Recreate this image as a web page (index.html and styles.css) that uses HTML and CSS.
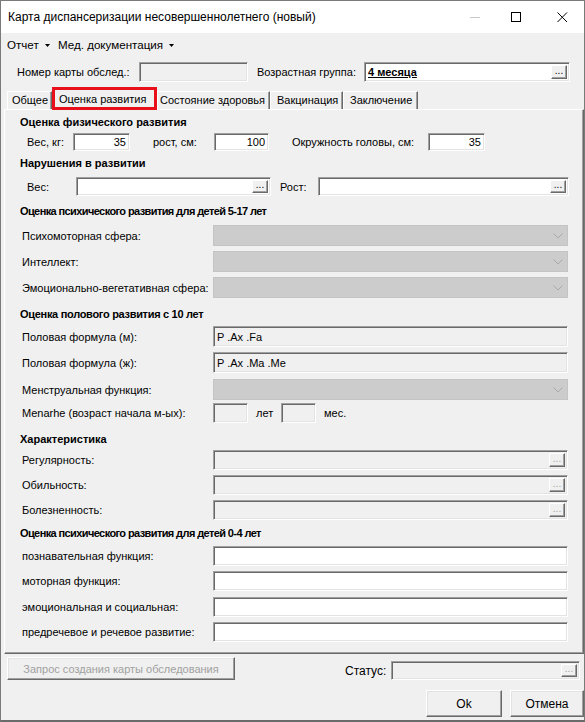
FILE: index.html
```html
<!DOCTYPE html>
<html lang="ru">
  <head>
    <meta charset="UTF-8" />
    <title>Карта диспансеризации несовершеннолетнего (новый)</title>
    <link rel="stylesheet" href="styles.css">
  </head>
  <body>
    <div class="window">
      <div class="titlebar">
        <span class="title">Карта диспансеризации несовершеннолетнего (новый)</span>
        <div class="caption-btns">
          <svg class="cap-min" width="11" height="11" viewBox="0 0 11 11"><path d="M0 5.5h10" stroke="#c8c8c8" stroke-width="1" /></svg>
          <svg class="cap-max" width="11" height="11" viewBox="0 0 11 11"><rect x="0.5" y="0.5" width="9" height="9" fill="none" stroke="#000" stroke-width="1" /></svg>
          <svg class="cap-close" width="11" height="11" viewBox="0 0 11 11"><path d="M0.5 0.5l9.5 9.5M10 0.5l-9.5 9.5" stroke="#000" stroke-width="1" /></svg>
        </div>
      </div>

      <div class="menubar">
        <span class="menu-item">Отчет <svg width="5" height="3" viewBox="0 0 5 3"><path d="M0 0h5l-2.5 3z" fill="#000" /></svg></span>
        <span class="menu-item">Мед. документация <svg width="5" height="3" viewBox="0 0 5 3"><path d="M0 0h5l-2.5 3z" fill="#000" /></svg></span>
      </div>

      <div class="header-row">
        <label class="hdr-label">Номер карты обслед.:</label>
        <input class="tb disabled card-no" type="text" value="" />
        <label class="hdr-label age-label">Возрастная группа:</label>
        <div class="tb picker age-group">
          <span class="picker-text"><b><u>4 месяца</u></b></span>
          <button class="dots">...</button>
        </div>
      </div>

      <div class="tabs">
        <span class="tab tab-common">Общее</span>
        <span class="tab tab-active">Оценка развития</span>
        <span class="tab tab-health">Состояние здоровья</span>
        <span class="tab tab-vacc">Вакцинация</span>
        <span class="tab tab-concl">Заключение</span>
      </div>

      <div class="tab-panel">
        <div class="group-title mt-5">Оценка физического развития</div>
        <div class="row indent mt-4 h-18">
          <span class="w-46">Вес, кг:</span>
          <input class="tb num w-57" type="text" value="35" />
          <span class="ml-23 w-61">рост, см:</span>
          <input class="tb num w-55" type="text" value="100" />
          <span class="ml-23 w-136">Окружность головы, см:</span>
          <input class="tb num w-57" type="text" value="35" />
        </div>

        <div class="group-title mt-5">Нарушения в развитии</div>
        <div class="row indent mt-7 h-19">
          <span class="w-49">Вес:</span>
          <div class="tb picker w-195"><span class="picker-text"></span><button class="dots">...</button></div>
          <span class="ml-9 w-38">Рост:</span>
          <div class="tb picker w-251"><span class="picker-text"></span><button class="dots">...</button></div>
        </div>

        <div class="group-title narrow mt-8">Оценка психического развития для детей 5-17 лет</div>
        <div class="row mt-7 h-21">
          <span class="label">Психомоторная сфера:</span>
          <div class="combo"><svg width="10" height="6" viewBox="0 0 10 6"><path d="M0.5 0.5l4.5 4.5 4.5-4.5" fill="none" stroke="#a9a9a9" /></svg></div>
        </div>
        <div class="row mt-5 h-21">
          <span class="label">Интеллект:</span>
          <div class="combo"><svg width="10" height="6" viewBox="0 0 10 6"><path d="M0.5 0.5l4.5 4.5 4.5-4.5" fill="none" stroke="#a9a9a9" /></svg></div>
        </div>
        <div class="row mt-5 h-21">
          <span class="label">Эмоционально-вегетативная сфера:</span>
          <div class="combo"><svg width="10" height="6" viewBox="0 0 10 6"><path d="M0.5 0.5l4.5 4.5 4.5-4.5" fill="none" stroke="#a9a9a9" /></svg></div>
        </div>

        <div class="group-title semi mt-9">Оценка полового развития с 10 лет</div>
        <div class="row mt-5 h-21">
          <span class="label">Половая формула (м):</span>
          <input class="tb disabled wide" type="text" value="P .Ax .Fa" />
        </div>
        <div class="row mt-5 h-21">
          <span class="label">Половая формула (ж):</span>
          <input class="tb disabled wide" type="text" value="P .Ax .Ma .Me" />
        </div>
        <div class="row mt-6 h-21">
          <span class="label">Менструальная функция:</span>
          <div class="combo"><svg width="10" height="6" viewBox="0 0 10 6"><path d="M0.5 0.5l4.5 4.5 4.5-4.5" fill="none" stroke="#a9a9a9" /></svg></div>
        </div>
        <div class="row mt-3 h-20">
          <span class="label">Menarhe (возраст начала м-ых):</span>
          <input class="tb disabled w-35" type="text" value="" />
          <span class="ml-8 w-25">лет</span>
          <input class="tb disabled w-35" type="text" value="" />
          <span class="ml-8">мес.</span>
        </div>

        <div class="group-title mt-9">Характеристика</div>
        <div class="row mt-4 h-20">
          <span class="label">Регулярность:</span>
          <div class="tb picker disabled wide"><span class="picker-text"></span><button class="dots">...</button></div>
        </div>
        <div class="row mt-5 h-20">
          <span class="label">Обильность:</span>
          <div class="tb picker disabled wide"><span class="picker-text"></span><button class="dots">...</button></div>
        </div>
        <div class="row mt-5 h-20">
          <span class="label">Болезненность:</span>
          <div class="tb picker disabled wide"><span class="picker-text"></span><button class="dots">...</button></div>
        </div>

        <div class="group-title narrow mt-6">Оценка психического развития для детей 0-4 лет</div>
        <div class="row mt-6 h-20">
          <span class="label">познавательная функция:</span>
          <input class="tb wide" type="text" value="" />
        </div>
        <div class="row mt-5 h-20">
          <span class="label">моторная функция:</span>
          <input class="tb wide" type="text" value="" />
        </div>
        <div class="row mt-6 h-20">
          <span class="label">эмоциональная и социальная:</span>
          <input class="tb wide" type="text" value="" />
        </div>
        <div class="row mt-5 h-20">
          <span class="label">предречевое и речевое развитие:</span>
          <input class="tb wide" type="text" value="" />
        </div>
      </div>

      <div class="footer-row">
        <button class="btn btn-request" disabled>Запрос создания карты обследования</button>
        <span class="status-label">Статус:</span>
        <div class="tb picker disabled status"><span class="picker-text"></span><button class="dots">...</button></div>
      </div>

      <div class="dialog-buttons">
        <button class="btn btn-ok">Ok</button>
        <button class="btn btn-cancel">Отмена</button>
      </div>
    </div>
  </body>
</html>
```

FILE: styles.css
```css
* {
  box-sizing: border-box;
}

body {
  margin: 0;
  font-family: "Liberation Sans", Arial, sans-serif;
  font-size: 11px;
  color: #000;
  background: #f0f0f0;
}

.window {
  width: 585px;
  height: 722px;
  border: 1px solid #7a7a7a;
  border-bottom: 2px solid #6a6a6a;
  background: #f0f0f0;
  display: flex;
  flex-direction: column;
  overflow: hidden;
}

/* title bar */
.titlebar {
  height: 32px;
  background: #fff;
  display: flex;
  align-items: center;
  padding-left: 7px;
  flex-shrink: 0;
}

.title {
  font-size: 12px;
  flex: 1;
}

.caption-btns {
  display: flex;
  align-items: center;
}

.caption-btns svg {
  display: block;
}

.cap-min {
  margin-right: 30px;
}

.cap-max {
  margin-right: 35px;
}

.cap-close {
  margin-right: 16px;
}

/* menu */
.menubar {
  height: 22px;
  display: flex;
  align-items: center;
  padding-left: 6px;
  font-size: 11.6px;
  flex-shrink: 0;
}

.menu-item {
  margin-right: 8px;
}

.menu-item svg {
  margin-left: 3px;
  vertical-align: 2px;
}

/* header row */
.header-row {
  height: 20px;
  margin-top: 7px;
  display: flex;
  align-items: center;
  padding-left: 16px;
  flex-shrink: 0;
}

.hdr-label {
  width: 122px;
}

.age-label {
  width: 107px;
  margin-left: 9px;
}

.card-no {
  width: 109px;
  height: 20px;
}

.age-group {
  width: 206px;
  height: 20px;
}

/* text boxes */
.tb {
  font: inherit;
  color: #000;
  background: #fff;
  border: 1px solid;
  border-color: #a0a0a0 #fff #fff #a0a0a0;
  box-shadow: inset 1px 1px 0 #696969, inset -1px -1px 0 #e3e3e3;
  padding: 0 3px;
  margin: 0;
  height: 100%;
  outline: none;
}

.tb.disabled {
  background: #f0f0f0;
}

.tb.num {
  text-align: right;
}

.tb.wide {
  width: 355px;
}

.picker {
  display: flex;
  align-items: center;
  padding: 2px 2px 2px 3px;
}

.picker-text {
  flex: 1;
}

.dots {
  width: 16px;
  height: 100%;
  padding: 0 0 2px;
  font: inherit;
  font-size: 10px;
  line-height: 1;
  display: flex;
  align-items: flex-end;
  justify-content: center;
  color: #000;
  background: #f0f0f0;
  border: 1px solid;
  border-color: #fff #696969 #696969 #fff;
  box-shadow: inset -1px -1px 0 #a0a0a0;
}

.picker.disabled .dots {
  color: #a0a0a0;
}

/* tabs */
.tabs {
  height: 22px;
  margin-top: 5px;
  display: flex;
  align-items: flex-end;
  padding-left: 6px;
  flex-shrink: 0;
}

.tab {
  height: 18px;
  line-height: 17px;
  padding-left: 4px;
  border-top: 1px solid #fff;
  border-left: 1px solid #fff;
  border-right: 1px solid #696969;
  box-shadow: inset -1px 0 0 #a0a0a0;
  white-space: nowrap;
}

.tab-common {
  width: 45px;
}

.tab-active {
  width: 105px;
  height: 23px;
  line-height: 18px;
  padding-left: 4px;
  margin-bottom: -1px;
  border: 3px solid #e8101a;
  box-shadow: none;
  background: #f0f0f0;
  position: relative;
  z-index: 1;
}

.tab-health {
  width: 113px;
  padding-left: 2px;
}

.tab-vacc {
  width: 73px;
  padding-left: 6px;
}

.tab-concl {
  width: 75px;
  padding-left: 6px;
}

/* tab page */
.tab-panel {
  height: 545px;
  margin-left: 3px;
  width: 580px;
  border-top: 1px solid #fff;
  border-left: 1px solid #fff;
  border-right: 1px solid #696969;
  border-bottom: 1px solid #696969;
  box-shadow: inset -1px -1px 0 #a0a0a0;
  padding-left: 15px;
  flex-shrink: 0;
}

.group-title {
  height: 14px;
  line-height: 14px;
  font-weight: bold;
  white-space: nowrap;
}

.group-title.narrow {
  letter-spacing: -0.6px;
}

.group-title.semi {
  letter-spacing: -0.3px;
}

.row {
  display: flex;
  align-items: center;
  padding-left: 2px;
  white-space: nowrap;
}

.row.indent {
  padding-left: 7px;
}

.label {
  width: 191px;
  flex-shrink: 0;
}

.combo {
  width: 355px;
  height: 100%;
  background: #cccccc;
  border: 1px solid #c4c4c4;
  display: flex;
  align-items: center;
  justify-content: flex-end;
  padding-right: 4px;
}

.combo svg {
  display: block;
}

/* spacing helpers */
.mt-3 { margin-top: 3px; }
.mt-4 { margin-top: 4px; }
.mt-5 { margin-top: 5px; }
.mt-6 { margin-top: 6px; }
.mt-7 { margin-top: 7px; }
.mt-8 { margin-top: 8px; }
.mt-9 { margin-top: 9px; }
.ml-8 { margin-left: 8px; }
.ml-9 { margin-left: 9px; }
.ml-23 { margin-left: 23px; }
.h-18 { height: 18px; }
.h-19 { height: 19px; }
.h-20 { height: 20px; }
.h-21 { height: 21px; }
.w-25 { width: 25px; }
.w-35 { width: 35px; }
.w-38 { width: 38px; }
.w-46 { width: 46px; }
.w-49 { width: 49px; }
.w-55 { width: 55px; }
.w-57 { width: 57px; }
.w-61 { width: 61px; }
.w-136 { width: 136px; }
.w-195 { width: 195px; }
.w-251 { width: 251px; }

/* bottom */
.footer-row {
  height: 23px;
  margin-top: 3px;
  display: flex;
  align-items: flex-end;
  padding-left: 6px;
  flex-shrink: 0;
}

.btn {
  font: inherit;
  font-size: 12px;
  color: #000;
  background: #f0f0f0;
  border: 1px solid;
  border-color: #fff #696969 #696969 #fff;
  box-shadow: inset -1px -1px 0 #a0a0a0, inset 1px 1px 0 #e3e3e3;
  padding: 0;
  margin: 0;
}

.btn-request {
  width: 228px;
  height: 23px;
  font-size: 11px;
  color: #a0a0a0;
}

.status-label {
  margin-left: 110px;
  width: 46px;
  font-size: 12px;
  align-self: center;
  margin-top: 4px;
}

.status {
  width: 189px;
  height: 19px;
}

.dialog-buttons {
  height: 27px;
  margin-top: 10px;
  display: flex;
  justify-content: flex-end;
  gap: 8px;
  padding-right: 0;
  flex-shrink: 0;
}

.btn-ok {
  width: 76px;
}

.btn-cancel {
  width: 74px;
}
```
